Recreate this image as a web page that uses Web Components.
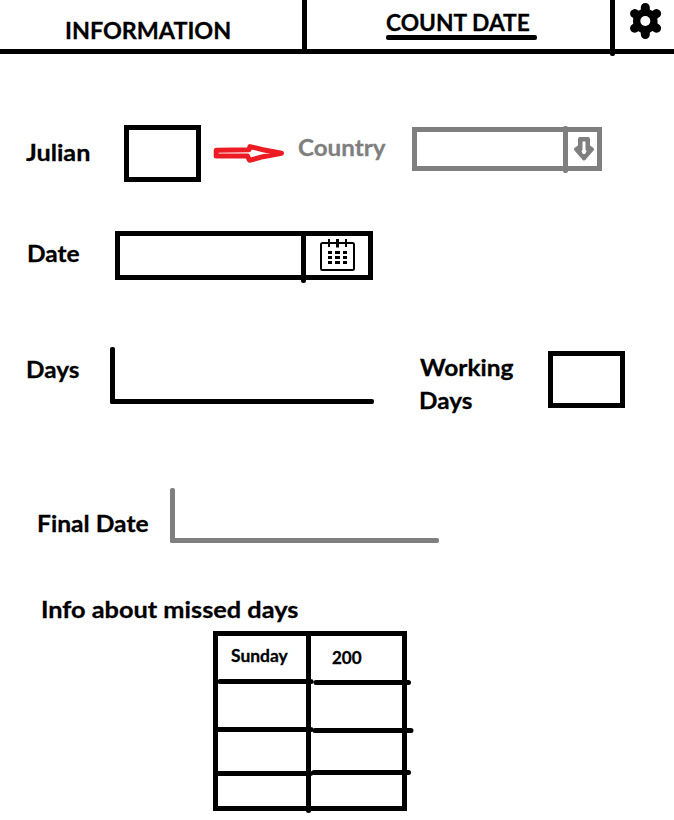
<!DOCTYPE html>
<html lang="en">
<head>
<meta charset="utf-8">
<title>Count Date</title>
<style>
html,body{margin:0;padding:0;background:#fff}
body{width:674px;height:820px;overflow:hidden;color:#000;font-family:Lato,"Noto Sans",sans-serif}
</style>
</head>
<body>
<date-app></date-app>
<script>
// Bold label whose inked width is set by its w attribute.
class FitLabel extends HTMLElement {
  connectedCallback() {
    const size = Number(this.getAttribute('size') || 23.6);
    const w = Number(this.getAttribute('w'));
    const c = document.createElement('canvas').getContext('2d');
    c.font = `bold ${size}px Lato`;
    const m = c.measureText(this.textContent.trim());
    const k = w / (m.actualBoundingBoxRight + m.actualBoundingBoxLeft);
    const dx = m.actualBoundingBoxLeft * k;
    this.attachShadow({mode: 'open'}).innerHTML = `
      <style>
        :host{display:block;flex:none;width:${w}px;height:${size * 1.2}px}
        span{display:block;width:max-content;font:bold ${size}px/1.2 Lato,"Noto Sans",sans-serif;white-space:nowrap;
          -webkit-text-stroke:.3px currentColor;
          transform-origin:0 0;transform:translateX(${dx}px) scaleX(${k})}
      </style><span><slot></slot></span>`;
  }
}
customElements.define('fit-label', FitLabel);

const define = (name, html) => customElements.define(name, class extends HTMLElement {
  constructor() { super(); this.attachShadow({mode: 'open'}).innerHTML = html; }
});

define('number-box', `
  <style>:host{display:block;flex:none;box-sizing:border-box;width:77px;height:57px;border:5px solid #000}</style>`);

define('split-field', `
  <style>
    :host{display:flex;flex:none;box-sizing:border-box;border:5px solid var(--ink,#000)}
    .v{flex:1}
    .d{flex:none;width:5px;margin:var(--over,-3px 0 -8px);background:var(--ink,#000);border-radius:2px}
    .b{flex:none;width:var(--button);display:flex}
  </style><div class="v"></div><div class="d"></div><div class="b"><slot></slot></div>`);

define('corner-field', `
  <style>
    :host{display:block;flex:none;box-sizing:border-box;position:relative}
    i{position:absolute;background:var(--ink,#000);border-radius:2px;left:0;bottom:0}
    .a{width:5px;top:0}.b{height:5px;right:0}
  </style><i class="a"></i><i class="b"></i>`);

define('gear-icon', `
  <style>:host,svg{display:block}</style>
  <svg width="33" height="38" viewBox="629 2 33 38">
    <path d="M645.3 7.5V34.5M634.6 13.6L656.6 28.2M656.6 13.6L634.6 28.2" fill="none" stroke="#000" stroke-width="9" stroke-linecap="round"/>
    <circle cx="645.3" cy="21" r="12.3" fill="#000"/>
    <circle cx="645.3" cy="21" r="5" fill="#fff"/>
  </svg>`);

define('right-arrow', `
  <style>:host,svg{display:block;flex:none}</style>
  <svg width="72" height="22" viewBox="213 142 72 22">
    <path d="M216.2 150.2L249 149.7L250 146.6L263 149.7L281.5 153.2L263 156.7L249.5 160.3L247.5 156L216.2 156Z" fill="#fff" stroke="#ed1c24" stroke-width="5" stroke-linejoin="round"/>
  </svg>`);

define('down-arrow', `
  <style>:host,svg{display:block}</style>
  <svg width="22" height="26" viewBox="573 136 22 26">
    <path d="M580 139H588V146.5L592 149.3L584 158.5L576 149.3L580 146.5Z" fill="#7f7f7f" stroke="#7f7f7f" stroke-width="4" stroke-linejoin="round"/>
    <path d="M582.5 141.5H585.5V149.5L586.5 151.5L585 154H583L581.5 151.5L582.5 149.5Z" fill="#fff"/>
  </svg>`);

define('calendar-icon', `
  <style>:host,svg{display:block}</style>
  <svg width="37" height="34" viewBox="319 238 37 34">
    <rect x="321" y="243" width="33" height="27" rx="1.5" fill="none" stroke="#000" stroke-width="2"/>
    <path d="M329 239V247M346 239V247" stroke="#000" stroke-width="2"/>
    <path d="M337.5 239V247.5" stroke="#000" stroke-width="3"/>
    <g stroke="#000" stroke-width="3" shape-rendering="crispEdges">
      <path d="M328 252.5H332M335 252.5H340M343 252.5H347M328 257.5H332M335 257.5H340M343 257.5H347M328 262.5H332M335 262.5H340M343 262.5H347"/>
    </g>
  </svg>`);

define('app-header', `
  <style>
    :host{display:flex;height:49px;border-bottom:5px solid #000}
    div{box-sizing:border-box;flex:none;border-right:5px solid #000}
    .one{width:307px;padding:16px 0 0 66px}
    .two{width:308px;padding:8px 0 0 79px;height:56px;border:0;display:flex}
    .two section{width:224px}
    .two i{width:5px;height:56px;margin-top:-8px;background:#000;border-radius:0 0 2px 2px}
    hr{width:151px;height:5px;margin:-1.3px 0 0;border:0;border-radius:2px;background:#000}
    gear-icon{margin:2px 0 0 14px}
  </style>
  <div class="one"><fit-label w="164">INFORMATION</fit-label></div>
  <div class="two"><section><fit-label w="144">COUNT DATE</fit-label><hr></section><i></i></div>
  <gear-icon></gear-icon>`);

// Hand-drawn rules run a little past the frame and step at the centre line.
define('missed-table', `
  <style>
    :host{display:block;position:relative;width:201px;height:182px}
    svg{position:absolute;left:0;top:0;overflow:visible}
    main{display:grid;grid-template-columns:95px 99px;grid-template-rows:53px 48px 43px 36px}
    main div:nth-child(1){padding:16.3px 0 0 18px}
    main div:nth-child(2){padding:18px 0 0 24px}
  </style>
  <svg width="201" height="182" viewBox="213 631 201 182">
    <rect x="215.5" y="633.5" width="189" height="175" fill="none" stroke="#000" stroke-width="5"/>
    <g stroke="#000" stroke-width="5" stroke-linecap="round">
      <path d="M308.5 635V810.5M220 681.5H311M316 682.5H408.5M218 729.5H311M315 730.5H411M218 773.5H310.5M314 772.5H408.5"/></g>
  </svg>
  <main><div><fit-label size="16.6" w="57">Sunday</fit-label></div><div><fit-label size="16.6" w="30">200</fit-label></div>
  <div></div><div></div><div></div><div></div><div></div><div></div></main>`);

define('date-app', `
  <style>
    :host{display:block}
    .row{display:flex;align-items:flex-start;box-sizing:border-box}
    .r1{height:146px}.r2{height:100px}.r3{height:140px}.r4{height:140px}
    .grey{color:#7f7f7f;--ink:#7f7f7f}
    .country{width:190px;height:44px;margin:73px 0 0 26px;--button:29px;--over:-6px 0 -7px}
    .date{width:258px;height:49px;margin:31px 0 0 36px;--button:62px}
    .days{width:264px;height:57px;margin:47px 0 0 31px}
    .final{width:269px;height:55px;margin:48px 0 0 22px}
  </style>
  <app-header></app-header>
  <div class="row r1">
    <fit-label w="63" style="margin:83.5px 0 0 26px">Julian</fit-label>
    <number-box style="margin:71px 0 0 35px"></number-box>
    <right-arrow style="margin:88px 0 0 12px"></right-arrow>
    <fit-label class="grey" w="88" style="margin:78.5px 0 0 13px">Country</fit-label>
    <split-field class="grey country"><down-arrow style="margin:4px 0 0 5px"></down-arrow></split-field>
  </div>
  <div class="row r2">
    <fit-label w="51" style="margin:38.5px 0 0 28px">Date</fit-label>
    <split-field class="date"><calendar-icon style="margin:2px 0 0 13px"></calendar-icon></split-field>
  </div>
  <div class="row r3">
    <fit-label w="52" style="margin:55px 0 0 27px">Days</fit-label>
    <corner-field class="days"></corner-field>
    <div style="margin:53px 0 0 46px;width:94px"><fit-label w="94">Working</fit-label><fit-label w="52" style="margin:4.4px 0 0 0">Days</fit-label></div>
    <number-box style="margin:51px 0 0 34px"></number-box>
  </div>
  <div class="row r4">
    <fit-label w="110" style="margin:68.5px 0 0 38px">Final Date</fit-label>
    <corner-field class="grey final"></corner-field>
  </div>
  <section style="padding:15px 0 0 42px">
    <fit-label w="256">Info about missed days</fit-label>
    <missed-table style="margin:7.7px 0 0 171px"></missed-table>
  </section>`);
</script>
</body>
</html>
